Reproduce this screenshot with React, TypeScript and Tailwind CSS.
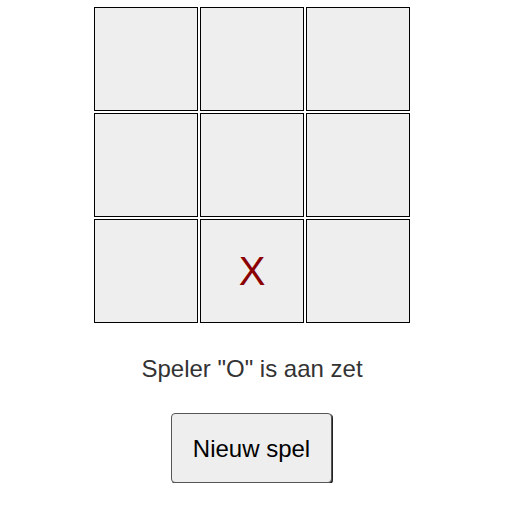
import React from "react";

export default function App() {
  const cells = ["", "", "", "", "", "", "", "X", ""];
  return (
    <div className="w-[504px] flex flex-col items-center pt-[7px]" style={{ fontFamily: '"Liberation Sans", Arial, sans-serif' }}>
      <div className="grid grid-cols-[104px_104px_104px] gap-[2px]">
        {cells.map((c, i) => (
          <div key={i} className="w-[104px] h-[104px] border border-black bg-[#eeeeee] flex items-center justify-center text-[40px] text-[#8b0000]">
            {c}
          </div>
        ))}
      </div>
      <div className="mt-[32px] text-[24px] leading-[28px] text-[#333333]">Speler "O" is aan zet</div>
      <div className="mt-[30px] w-[162px] flex">
        <button className="w-[161px] h-[70px] pt-[2px] bg-[#eeeeee] border border-[#555555] rounded-[4px] shadow-[1px_1px_0_#222222] text-[24px] text-black">
          Nieuw spel
        </button>
      </div>
    </div>
  );
}
